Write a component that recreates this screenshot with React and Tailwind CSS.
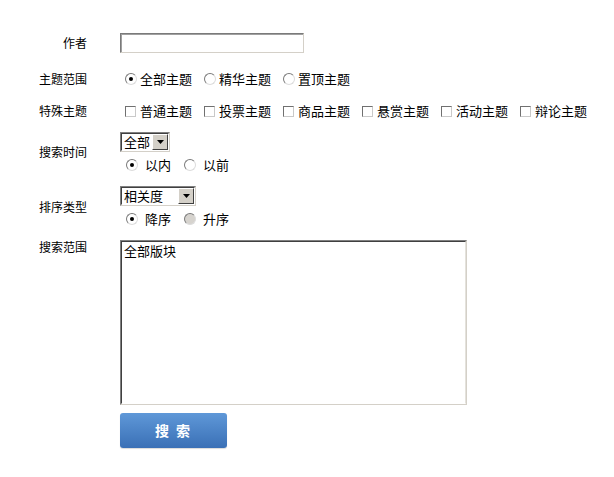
import React from 'react';

const font = { fontFamily: '"Noto Sans CJK SC", "Liberation Sans", sans-serif' };

const Radio = ({ checked, disabled }) => (
  <span
    className={`relative inline-block w-[12px] h-[12px] rounded-full border border-t-[#7a7a7a] border-l-[#7a7a7a] border-b-[#dcdcdc] border-r-[#dcdcdc] ${disabled ? 'bg-[#d6d3ce]' : 'bg-white'}`}
  >
    {checked && (
      <span className="absolute left-[3px] top-[3px] w-[4px] h-[4px] rounded-full bg-black" />
    )}
  </span>
);

const Checkbox = () => (
  <span className="inline-block w-[11px] h-[11px] border border-t-[#707070] border-l-[#707070] border-b-[#c9c9c9] border-r-[#c9c9c9] bg-white" />
);

const Option = ({ children, type = 'radio', checked, disabled }) => (
  <span className="inline-flex items-center mr-[7px]">
    <span className={`ml-[5px] flex items-center ${type === 'radio' ? 'mr-[3px]' : 'mr-[4px]'}`}>
      {type === 'radio' ? <Radio checked={checked} disabled={disabled} /> : <Checkbox />}
    </span>
    <span className="text-[13px] leading-[20px] text-black">{children}</span>
  </span>
);

const SmallOption = ({ children, checked, disabled }) => (
  <span className="inline-flex items-center mr-[7px]">
    <span className="ml-[6px] mr-[7px] flex items-center">
      <Radio checked={checked} disabled={disabled} />
    </span>
    <span className="text-[13px] leading-[20px] text-black">{children}</span>
  </span>
);

const Select = ({ value, width }) => (
  <div
    className={`${width} h-[20px] flex border border-t-[#808080] border-l-[#808080] border-b-[#d4d0c8] border-r-[#d4d0c8]`}
  >
    <div className="flex-1 flex border border-t-[#404040] border-l-[#404040] border-b-white border-r-white bg-white">
      <span className="flex-1 pl-[2px] text-[13px] leading-[16px] text-black">{value}</span>
      <span className="w-[16px] h-[16px] flex items-center justify-center bg-[#d4d0c8] border border-t-white border-l-white border-b-[#404040] border-r-[#404040]">
        <svg width="7" height="4" viewBox="0 0 7 4">
          <path d="M0 0h7L3.5 4z" fill="#000" />
        </svg>
      </span>
    </div>
  </div>
);

const Label = ({ children, className = '' }) => (
  <div className={`w-[87px] shrink-0 text-right text-[12px] text-black ${className}`}>{children}</div>
);

export default function App() {
  return (
    <div className="w-[614px] h-[477px] bg-white pt-[33px]" style={font}>
      {/* 作者 */}
      <div className="flex items-center h-[20px]">
        <Label className="leading-[20px]">作者</Label>
        <div className="ml-[33px] w-[184px] h-[20px] border border-t-[#7a7a7a] border-l-[#7a7a7a] border-b-[#d4d0c8] border-r-[#d4d0c8]">
          <div className="w-full h-full border-t border-l border-t-[#a0a0a0] border-l-[#a0a0a0] bg-white" />
        </div>
      </div>

      {/* 主题范围 */}
      <div className="flex items-center h-[20px] mt-[16px]">
        <Label className="leading-[20px]">主题范围</Label>
        <div className="ml-[33px] flex items-center">
          <Option checked>全部主题</Option>
          <Option>精华主题</Option>
          <Option>置顶主题</Option>
        </div>
      </div>

      {/* 特殊主题 */}
      <div className="flex items-center h-[20px] mt-[12px]">
        <Label className="leading-[20px]">特殊主题</Label>
        <div className="ml-[33px] flex items-center">
          <Option type="checkbox">普通主题</Option>
          <Option type="checkbox">投票主题</Option>
          <Option type="checkbox">商品主题</Option>
          <Option type="checkbox">悬赏主题</Option>
          <Option type="checkbox">活动主题</Option>
          <Option type="checkbox">辩论主题</Option>
        </div>
      </div>

      {/* 搜索时间 */}
      <div className="flex mt-[11px]">
        <Label className="leading-[20px] pt-[10px]">搜索时间</Label>
        <div className="ml-[33px] flex flex-col">
          <Select value="全部" width="w-[50px]" />
          <div className="flex items-center h-[20px] mt-[3px]">
            <SmallOption checked>以内</SmallOption>
            <SmallOption>以前</SmallOption>
          </div>
        </div>
      </div>

      {/* 排序类型 */}
      <div className="flex mt-[11px]">
        <Label className="leading-[20px] pt-[11px]">排序类型</Label>
        <div className="ml-[33px] flex flex-col">
          <Select value="相关度" width="w-[76px]" />
          <div className="flex items-center h-[20px] mt-[3px]">
            <SmallOption checked>降序</SmallOption>
            <SmallOption disabled>升序</SmallOption>
          </div>
        </div>
      </div>

      {/* 搜索范围 */}
      <div className="flex mt-[11px]">
        <Label className="leading-[13px]">搜索范围</Label>
        <div className="ml-[33px] w-[347px] h-[165px] border border-t-[#808080] border-l-[#808080] border-b-[#d4d0c8] border-r-[#d4d0c8]">
          <div className="w-full h-full border border-t-[#404040] border-l-[#404040] border-b-white border-r-[#e4e2dc] bg-white px-[2px] pt-[1px] text-[13px] leading-[16px] text-black">
            全部版块
          </div>
        </div>
      </div>

      {/* 搜索按钮 */}
      <div className="flex mt-[8px]">
        <div className="w-[87px] shrink-0" />
        <button className="ml-[33px] w-[107px] h-[35px] rounded-[3px] bg-gradient-to-b from-[#5f98d8] to-[#3a70b6] text-white text-[14px] font-bold tracking-[2px] shadow-[0_1px_1px_rgba(0,0,0,0.15)]">
          搜 索
        </button>
      </div>
    </div>
  );
}
